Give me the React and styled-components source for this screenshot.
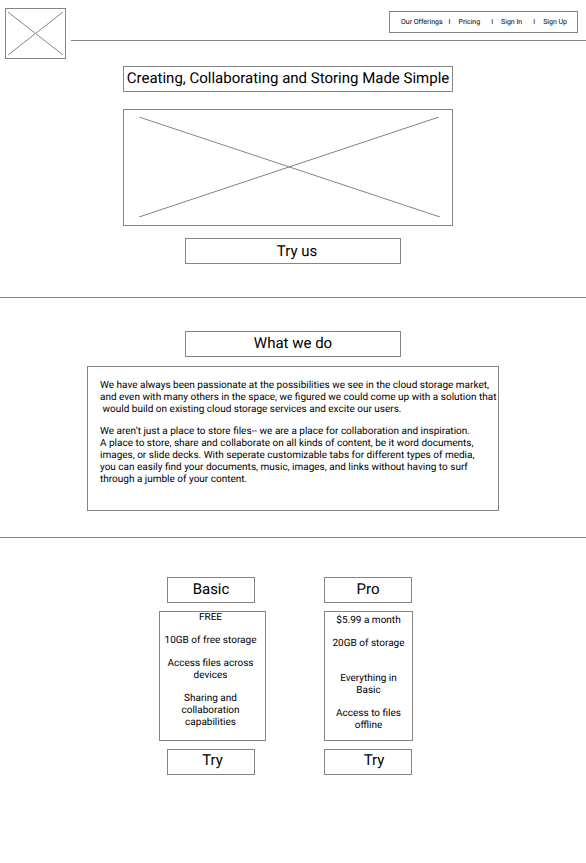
import React from "react";
import styled, { createGlobalStyle } from "styled-components";

const GlobalStyle = createGlobalStyle`
  *, *::before, *::after { box-sizing: border-box; }
  body {
    margin: 0;
    background: #fff;
    color: #000;
    font-family: Roboto, "Liberation Sans", sans-serif;
    font-size: 10px;
    line-height: 12px;
    text-rendering: geometricPrecision;
  }
  h1, h2, h3, p, ul { margin: 0; padding: 0; font-weight: 400; }
  ul { list-style: none; }
`;

const line = "#858585";

const Header = styled.header`
  display: flex;
  gap: 5px;
  padding: 8px 0 0 5px;
`;

const Logo = styled.a`
  display: block;
  flex: none;
  width: 61px;
  height: 51px;
  border: 1px solid ${line};
`;

const Cross = styled.svg`
  display: block;
  width: 100%;
  height: 100%;
  stroke: ${line};
  stroke-width: 1;
`;

const HeaderBar = styled.div`
  flex: 1;
  height: 33px;
  padding: 3px 8px 0 0;
  border-bottom: 1px solid ${line};
`;

const Nav = styled.nav`
  display: flex;
  align-items: center;
  width: max-content;
  height: 22px;
  margin-left: auto;
  padding: 0 10px 0 11px;
  border: 1px solid ${line};
  font-size: 7px;
`;

const NavLink = styled.a`
  color: inherit;
  text-decoration: none;
`;

const Separator = styled.span`
  margin: 0 8px 0 ${(p) => (p.$tight ? 6 : 11)}px;
`;

const Section = styled.section`
  display: flex;
  flex-direction: column;
  align-items: center;
  padding: ${(p) => p.$top}px 0 ${(p) => p.$bottom}px;
  border-bottom: ${(p) => (p.$last ? "none" : `1px solid ${line}`)};
`;

const HeroGroup = styled.div`
  display: flex;
  flex-direction: column;
  gap: 17px;
  width: 340px;
  max-width: 100%;
  margin-bottom: 12px;
  padding-right: 10px;
`;

const Title = styled.h1`
  height: 26px;
  border: 1px solid ${line};
  font-size: 15px;
  line-height: 22px;
  text-align: center;
  white-space: nowrap;
`;

const HeroImage = styled.div`
  height: 117px;
  padding: 7px 12px 8px 15px;
  border: 1px solid ${line};
`;

const Heading = styled.h2`
  width: ${(p) => (p.$small ? 88 : 216)}px;
  height: 26px;
  border: 1px solid ${line};
  font-size: 15px;
  line-height: 22px;
  text-align: center;
`;

const Button = styled.button`
  width: ${(p) => (p.$small ? 88 : 216)}px;
  height: 26px;
  padding: 0 0 ${(p) => (p.$small ? 4 : 0)}px ${(p) => p.$indent}px;
  border: 1px solid ${line};
  background: #fff;
  color: inherit;
  font: inherit;
  font-size: 15px;
  line-height: 20px;
  text-align: center;
  text-rendering: inherit;
  cursor: pointer;
`;

const Copy = styled.div`
  display: flex;
  flex-direction: column;
  gap: 10px;
  width: 412px;
  min-height: 145px;
  margin-top: 9px;
  padding: 13px 0 24px 12px;
  border: 1px solid ${line};
  white-space: pre;
`;

const Plans = styled.div`
  display: flex;
  justify-content: center;
  gap: 58px;
  padding-right: 14px;
`;

const Plan = styled.article`
  display: flex;
  flex-direction: column;
  justify-content: space-between;
  height: 198px;

  > h3, > button { margin-left: ${(p) => p.$inset}px; }
`;

const Features = styled.ul`
  display: flex;
  flex-direction: column;
  gap: 11px;
  width: ${(p) => p.$width}px;
  height: 130px;
  padding: ${(p) => p.$pad};
  border: 1px solid ${line};
  text-align: center;
  white-space: pre-line;
`;

const Feature = styled.li`
  margin-top: ${(p) => (p.$spaced ? 12 : 0)}px;
`;

const intro =
  "We have always been passionate at the possibilities we see in the cloud storage market,\n" +
  "and even with many others in the space, we figured we could come up with a solution that\n" +
  " would build on existing cloud storage services and excite our users.";

const details =
  "We aren’t just a place to store files-- we are a place for collaboration and inspiration.\n" +
  "A place to store, share and collaborate on all kinds of content, be it word documents,\n" +
  "images, or slide decks. With seperate customizable tabs for different types of media,\n" +
  "you can easily find your documents, music, images, and links without having to surf\n" +
  "through a jumble of your content.";

const plans = [
  {
    name: "Basic",
    width: 107,
    inset: 8,
    pad: "0 4px 0 0",
    indent: 3,
    features: [
      { text: "FREE" },
      { text: "10GB of free storage" },
      { text: "Access files across\ndevices" },
      { text: "Sharing and\ncollaboration\ncapabilities" },
    ],
  },
  {
    name: "Pro",
    width: 89,
    inset: 0,
    pad: "3px 0 0",
    indent: 12,
    features: [
      { text: "$5.99 a month" },
      { text: "20GB of storage" },
      { text: "Everything in\nBasic", spaced: true },
      { text: "Access to files\noffline" },
    ],
  },
];

export default function App() {
  return (
    <>
      <GlobalStyle />
      <Header>
        <Logo href="#" aria-label="Home">
          <Cross viewBox="0 0 59 49">
            <path d="M2 3L57 46M57 3L2 46" />
          </Cross>
        </Logo>
        <HeaderBar>
          <Nav>
            <NavLink href="#offerings">Our Offerings</NavLink>
            <Separator $tight>I</Separator>
            <NavLink href="#pricing">Pricing</NavLink>
            <Separator>I</Separator>
            <NavLink href="#signin">Sign In</NavLink>
            <Separator>I</Separator>
            <NavLink href="#signup">Sign Up</NavLink>
          </Nav>
        </HeaderBar>
      </Header>
      <main>
        <Section $top={7} $bottom={33}>
          <HeroGroup>
            <Title>Creating, Collaborating and Storing Made Simple</Title>
            <HeroImage>
              <Cross viewBox="0 0 301 100" preserveAspectRatio="none">
                <path d="M0 0L301 100M300 0L0 100" />
              </Cross>
            </HeroImage>
          </HeroGroup>
          <Button $indent={8}>Try us</Button>
        </Section>
        <Section id="offerings" $top={33} $bottom={26}>
          <Heading>What we do</Heading>
          <Copy>
            <p>{intro}</p>
            <p>{details}</p>
          </Copy>
        </Section>
        <Section id="pricing" $top={39} $bottom={88} $last>
          <Plans>
            {plans.map((plan) => (
              <Plan key={plan.name} $inset={plan.inset}>
                <Heading as="h3" $small>{plan.name}</Heading>
                <Features $width={plan.width} $pad={plan.pad}>
                  {plan.features.map((f) => (
                    <Feature key={f.text} $spaced={f.spaced}>{f.text}</Feature>
                  ))}
                </Features>
                <Button $small $indent={plan.indent}>Try</Button>
              </Plan>
            ))}
          </Plans>
        </Section>
      </main>
    </>
  );
}
